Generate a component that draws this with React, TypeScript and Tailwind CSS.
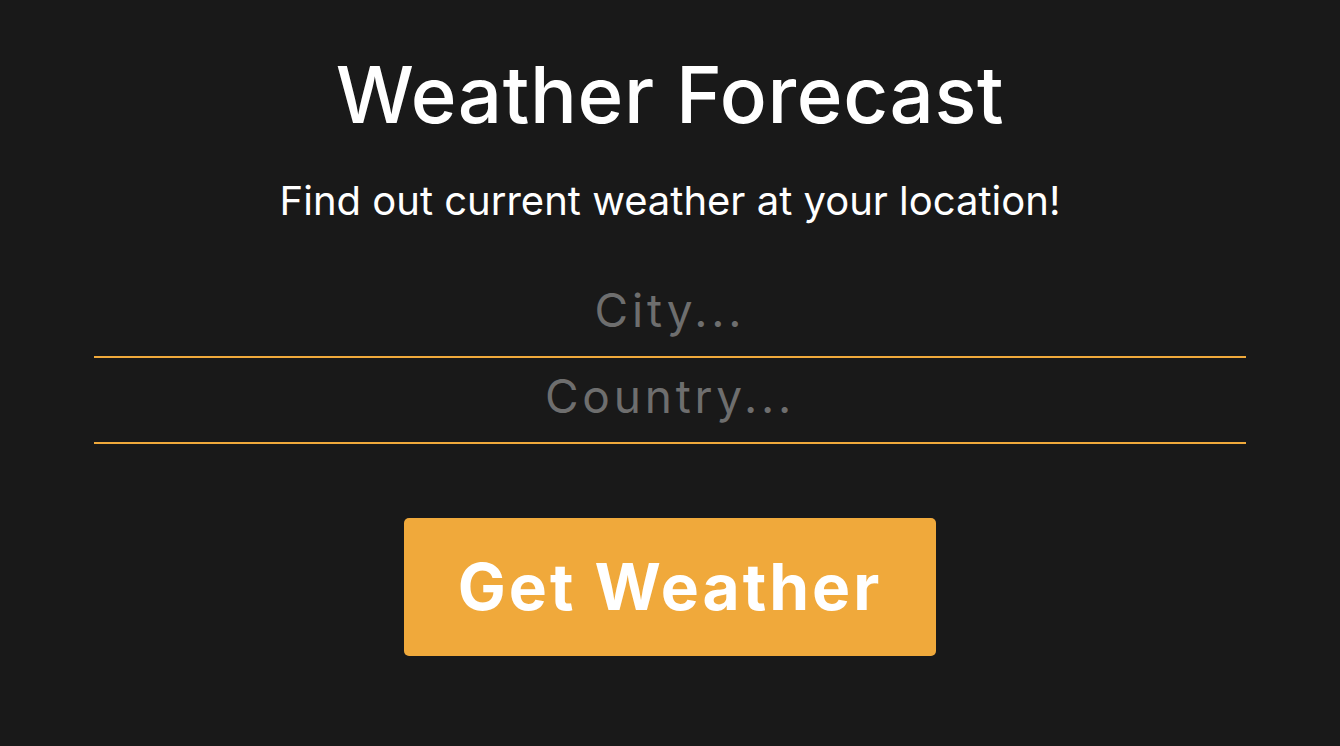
export default function App() {
  return (
    <div
      className="min-h-[746px] w-full bg-[#191919] flex flex-col items-center text-white"
      style={{ fontFamily: 'Inter, "Noto Sans", sans-serif' }}
    >
      <h1 className="mt-[50px] text-[78px] leading-[90px] font-medium tracking-[0.6px]">Weather Forecast</h1>
      <p className="mt-[37px] text-[40px] leading-[48px] font-normal">Find out current weather at your location!</p>
      <div className="mt-[47px] w-[1152px] flex flex-col">
        <input
          placeholder="City..."
          className="h-[86px] w-full pb-[8px] bg-transparent border-b-2 border-[#f0a93b] text-center text-[46px] tracking-[3.8px] text-white placeholder:text-[#6e6e6e] outline-none"
          style={{ fontFamily: 'Inter, "Noto Sans", sans-serif' }}
        />
        <input
          placeholder="Country..."
          className="h-[86px] w-full pb-[8px] bg-transparent border-b-2 border-[#f0a93b] text-center text-[46px] tracking-[3.8px] text-white placeholder:text-[#6e6e6e] outline-none"
          style={{ fontFamily: 'Inter, "Noto Sans", sans-serif' }}
        />
      </div>
      <button className="mt-[74px] w-[532px] h-[138px] rounded-[5px] bg-[#f0a93b] text-white text-[64px] font-bold tracking-[3px]">
        Get Weather
      </button>
    </div>
  );
}
